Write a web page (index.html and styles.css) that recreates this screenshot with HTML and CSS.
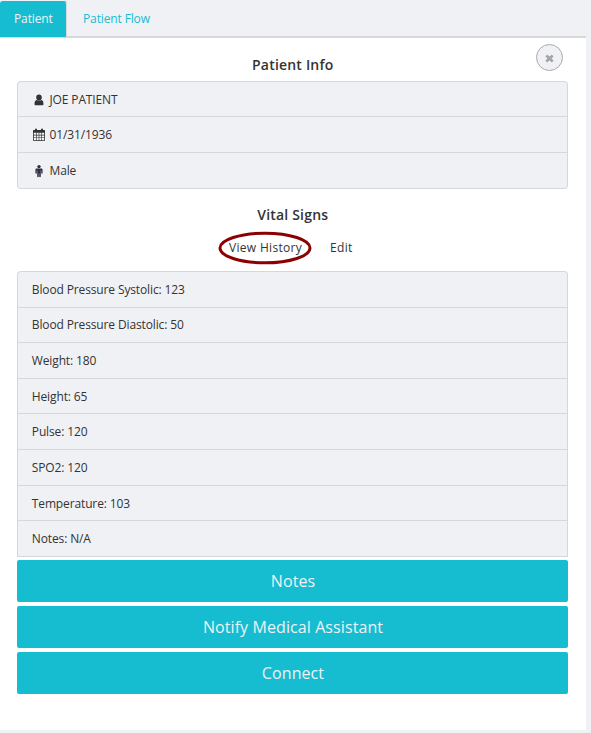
FILE: index.html
```html
<!DOCTYPE html>
<html lang="en">
<head>
<meta charset="utf-8">
<title>Patient</title>
<link rel="stylesheet" href="styles.css">
</head>
<body>
<nav class="tabs">
  <a class="tab active">Patient</a>
  <a class="tab">Patient Flow</a>
</nav>
<main class="panel">
  <button class="close" aria-label="Close"><svg width="9" height="9" viewBox="0 0 9 9"><path d="M1.300 1.500 7.700 7.500M7.700 1.500 1.300 7.500" stroke="#a3a3a3" stroke-width="2.600"/></svg></button>
  <h2 class="title">Patient Info</h2>
  <ul class="list info">
    <li><svg class="icon" width="14" height="14" viewBox="0 0 14 14"><path d="M7 1.500c1.800 0 2.800 1.200 2.800 2.900C9.800 6 8.700 7.500 7 7.500S4.200 6 4.200 4.400C4.200 2.700 5.200 1.500 7 1.500ZM4.600 7C5.900 8.100 8.100 8.100 9.400 7c1.500.3 2.100 2 2.100 3.900 0 .9-.5 1.400-1.400 1.400H3.900c-.9 0-1.400-.5-1.400-1.400 0-1.900.6-3.600 2.100-3.900Z"/></svg><span>JOE PATIENT</span></li>
    <li><svg class="icon calendar" width="14" height="14" viewBox="0 0 14 14"><path fill-rule="evenodd" d="M2 2h1V.8h2V2h4V.8h2V2h1c.6 0 1 .4 1 1v9c0 .6-.4 1-1 1H2c-.6 0-1-.4-1-1V3c0-.6.4-1 1-1ZM1.800 4.800v2h2.200v-2ZM4.600 4.800v2h2.100v-2ZM7.300 4.800v2h2.100v-2ZM10 4.800v2h2.200v-2ZM1.800 7.400v2h2.200v-2ZM4.600 7.400v2h2.100v-2ZM7.300 7.400v2h2.100v-2ZM10 7.400v2h2.200v-2ZM1.800 10v2.200h2.200V10ZM4.600 10v2.200h2.100V10ZM7.300 10v2.200h2.100V10ZM10 10v2.200h2.200V10Z"/></svg><span>01/31/1936</span></li>
    <li><svg class="icon male" width="14" height="14" viewBox="0 0 14 14"><circle cx="7" cy="2.600" r="1.700"/><path d="M4.800 4.600h4.400c.8 0 1.400.5 1.400 1.400v3c0 1-1.400 1-1.400 0V6.500h-.4v5.900c0 1.100-1.600 1.100-1.600 0V9.500h-.4v2.900c0 1.100-1.600 1.100-1.600 0V6.500h-.4V9c0 1-1.400 1-1.400 0V6c0-.9.600-1.400 1.400-1.400Z"/></svg><span>Male</span></li>
  </ul>
  <h2 class="title">Vital Signs</h2>
  <div class="links">
    <a class="history">View History<svg class="ring" width="94" height="34" viewBox="0 0 94 34"><ellipse cx="47" cy="17" rx="45" ry="14.800" fill="none" stroke="#8b0000" stroke-width="3"/></svg></a>
    <a>Edit</a>
  </div>
  <ul class="list vitals">
    <li><span>Blood Pressure Systolic: 123</span></li>
    <li><span>Blood Pressure Diastolic: 50</span></li>
    <li><span>Weight: 180</span></li>
    <li><span>Height: 65</span></li>
    <li><span>Pulse: 120</span></li>
    <li><span>SPO2: 120</span></li>
    <li><span>Temperature: 103</span></li>
    <li><span>Notes: N/A</span></li>
  </ul>
  <div class="actions">
    <button>Notes</button>
    <button>Notify Medical Assistant</button>
    <button>Connect</button>
  </div>
</main>
</body>
</html>
```
FILE: styles.css
```css
* { box-sizing: border-box; }
body { margin: 0; height: 733px; overflow: hidden; background: #f0f1f5; color: #333; font: 12px/18px "Open Sans", sans-serif; }
.tabs { display: flex; width: 586px; height: 38px; padding-top: 1px; border-bottom: 2px solid #d8d9db; }
.tab { display: flex; align-items: center; height: 36px; padding: 0 16px 1px; color: #16bdd0; letter-spacing: -.13px; }
.tab.active { width: 67px; margin-bottom: -1px; padding: 0 0 1px 14px; border: 1px solid #d5d8dc; border-width: 1px 1px 0 0; border-radius: 3px 3px 0 0; background: #16bdd0; color: #f0f1f5; border-top-color: #16bdd0; }
.panel { position: relative; width: 586px; height: 692px; padding: 16px 18px 0 17px; background: #fff; }
.close { position: absolute; left: 536px; top: 6px; width: 27px; height: 27px; display: grid; place-items: center; padding: 1px 0 0; border: 1px solid #aaa; border-radius: 50%; background: #f0f1f5; }
.title { height: 22px; margin: 0; text-align: center; font-size: 14px; line-height: 22px; font-weight: 600; letter-spacing: .19px; text-indent: .5px; }
.list { margin: 0; padding: 0; list-style: none; border: 1px solid #d5d7dc; border-bottom: 0; border-radius: 4px 4px 0 0; background: #f0f1f5; overflow: hidden; letter-spacing: -.13px; }
.list li { display: flex; align-items: center; height: 35.6px; padding: 1.4px 0 0 13.8px; border-bottom: 1px solid #d5d7dc; }
.info { margin-top: 4.75px; margin-bottom: 15.45px; border-radius: 4px; }
.info li:last-child { height: 35.8px; border-radius: 0 0 4px 4px; }
.icon { margin: 0 3.5px 0 .2px; fill: #333; }
.male { fill: #303044; }
.links { display: flex; gap: 28px; height: 24px; margin-top: 10px; padding-left: 212px; line-height: 24px; letter-spacing: .31px; }
.history { position: relative; }
.ring { position: absolute; left: -11px; top: -5px; }
.vitals { margin-top: 10.800px; }
.vitals li:nth-child(2) { padding-top: 1px; }
.actions { display: grid; gap: 4px; margin-top: 3.200px; }
.actions button { height: 42px; padding: 0 0 0 1px; border: 0; border-radius: 2px; background: #16bdd0; color: #f0f1f5; font: 16px/24px "Open Sans", sans-serif; letter-spacing: .09px; }
```
